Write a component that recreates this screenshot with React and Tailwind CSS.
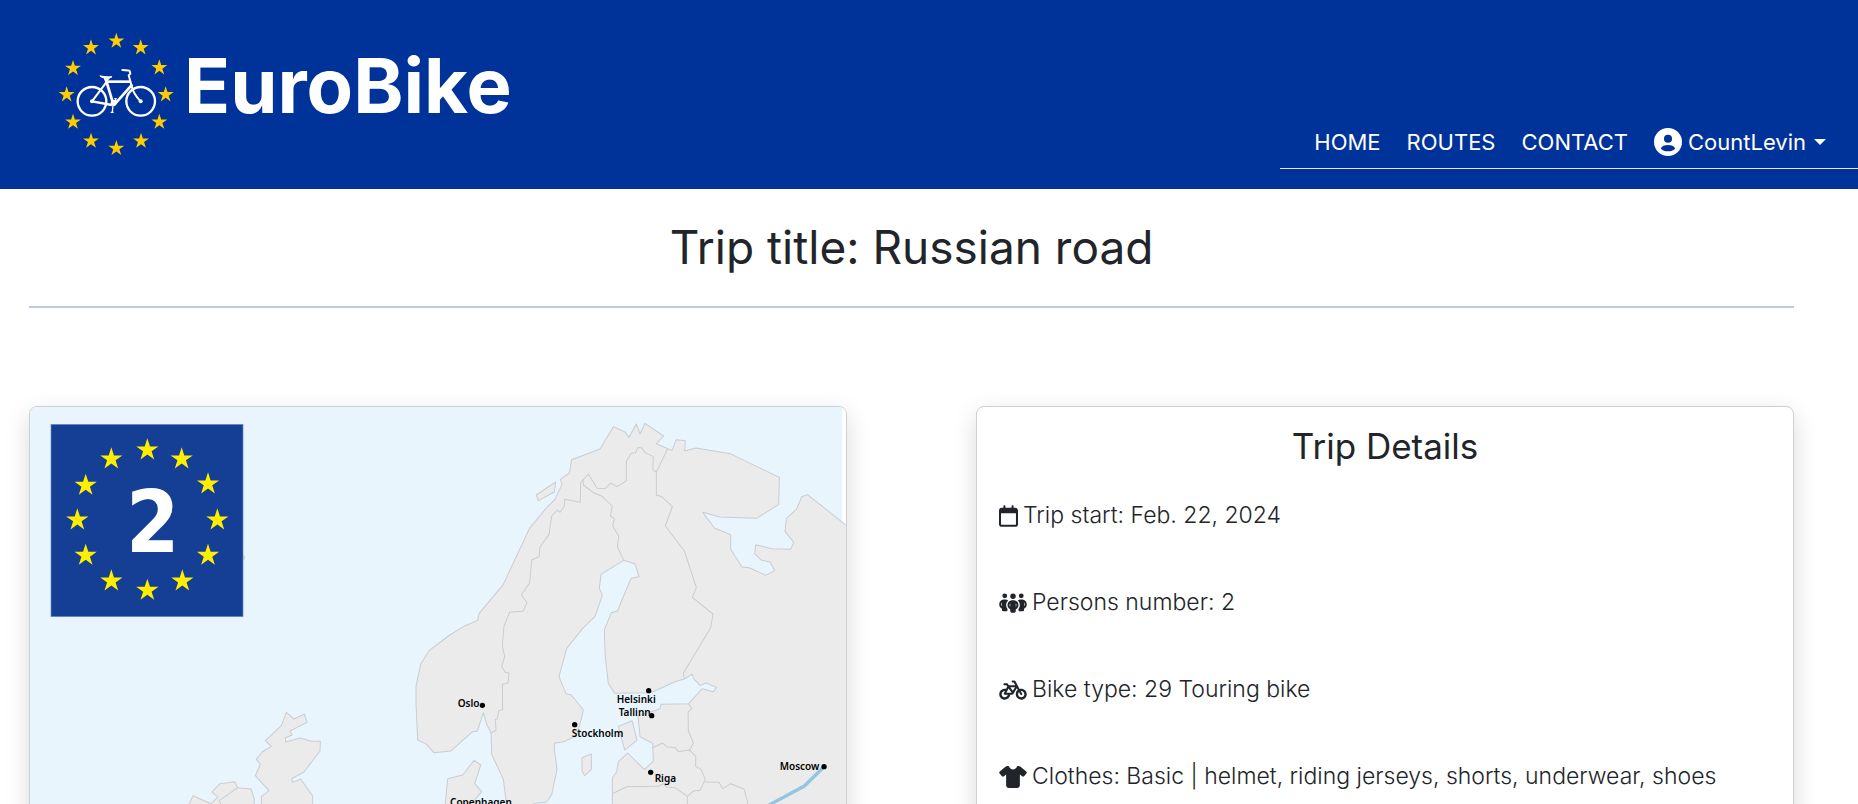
import { FaBicycle, FaPeopleGroup, FaRegCalendar, FaShirt } from "react-icons/fa6";

function starPoints(cx, cy, r) {
  return Array.from({ length: 10 }, (_, i) => {
    const radius = i % 2 === 0 ? r : r * 0.382;
    const angle = (Math.PI / 5) * i - Math.PI / 2;
    return `${(cx + radius * Math.cos(angle)).toFixed(1)},${(cy + radius * Math.sin(angle)).toFixed(1)}`;
  }).join(" ");
}

function Stars({ centers, r, fill }) {
  return centers.map(([x, y]) => <polygon key={`${x}-${y}`} points={starPoints(x, y, r)} fill={fill} />);
}

const LOGO_STARS = [
  [199, 63], [272, 83], [328, 143], [347, 224], [328, 306], [273, 363],
  [199, 385], [123, 363], [69, 306], [50, 224], [69, 145], [123, 83],
];

const SIGN_STARS = [
  [382, 177], [485, 204], [564, 279], [592, 387], [564, 493], [487, 570],
  [382, 598], [274, 570], [197, 493], [172, 387], [197, 283], [274, 204],
];

function Logo() {
  return (
    <svg viewBox="0 0 402 450" className="h-[150px] w-[134px] shrink-0" aria-hidden="true">
      <Stars centers={LOGO_STARS} r={25} fill="#ffcc00" />
      <g fill="none" stroke="#fff" strokeLinejoin="round">
        <circle cx="126" cy="244" r="43" strokeWidth="7" />
        <circle cx="272" cy="244" r="43" strokeWidth="7" />
        <path d="M168 180 L191 256" strokeWidth="8" />
        <path d="M126 244 L171 184" strokeWidth="6" />
        <path d="M126 244 L186 255" strokeWidth="7" />
        <path d="M173 185 L240 185" strokeWidth="8" />
        <path d="M191 256 L247 193" strokeWidth="8" />
        <path d="M272 244 Q250 222 245 198 L236 166 L241 161 L239 153 Q237 151 217 150" strokeWidth="6" strokeLinecap="round" />
        <path d="M189 256 L187 276 M182 277 L191 277 M197 244 L197 236 M193 236 L200 236" strokeWidth="4" />
      </g>
      <path d="M149 166 Q168 170 185 168 Q190 171 180 175 L173 182 L164 182 L161 175 Q148 172 149 166 Z" fill="#fff" />
      <circle cx="191" cy="248" r="9" fill="#fff" />
      <circle cx="126" cy="244" r="6" fill="#fff" />
      <circle cx="272" cy="244" r="6" fill="#fff" />
    </svg>
  );
}

function UserIcon() {
  return (
    <svg viewBox="2 2 20 20" className="h-7 w-7" fill="currentColor" aria-hidden="true">
      <path
        fillRule="evenodd"
        d="M12 2a10 10 0 1 0 0 20a10 10 0 1 0 0-20zM12 6.800a2.900 2.900 0 1 1 0 5.800a2.900 2.900 0 1 1 0-5.800zM6.800 16.600C7.600 14.800 9.500 14.100 12 14.100S16.400 14.800 17.200 16.600C16 18 14.200 18.600 12 18.600S8 18 6.800 16.600z"
      />
    </svg>
  );
}

const MAINLAND =
  "M53 1047 L48 940 48 885 62 820 88 778 145 735 195 704 233 688 237 668 310 580 388 413 440 350 465 325 486 280 481 265 508 246 515 206 600 174 640 107 675 123 687 139 709 99 720 129 735 97 791 135 769 158 803 173 816 178 829 146 856 149 854 180 888 171 990 188 1138 259 1136 340 1070 382 960 378 908 364 943 411 992 431 992 475 1026 528 1048 530 1097 553 1124 539 1110 513 1083 507 1064 488 1067 461 1115 473 1172 475 1181 454 1155 421 1159 382 1190 354 1205 317 1222 311 1345 408 L1345 2600 100 2600 60 1600 200 1420 560 1400 637 1300 637 1160 650 1142 655 1112 683 1086 733 1136 760 1110 758 1057 720 1037 714 975 780 953 783 940 866 938 907 893 940 902 949 889 919 876 900 883 880 862 877 849 853 864 830 870 752 905 645 907 625 878 616 800 613 716 634 665 652 660 693 562 717 557 705 519 671 508 603 550 598 592 607 613 585 676 548 712 500 772 477 857 498 908 514 912 550 957 540 1000 528 1035 490 1052 463 1057 463 1075 471 1135 455 1210 440 1233 400 1238 380 1290 330 1300 320 1242 310 1165 275 1090 273 1025 260 1000 250 965 232 1020 216 1023 152 1080 101 1085 80 1060 Z";

const ISLANDS = [
  "M467 273 L463 303 415 329 409 312 Z",
  "M655 1006 L696 989 711 1047 674 1077 Z",
  "M546 1100 L574 1089 574 1135 554 1154 546 1140 Z",
  "M135 1245 L143 1163 188 1152 222 1108 242 1122 224 1178 245 1202 225 1225 230 1420 140 1420 Z",
];

const BORDERS = [
  "M273 1025 L288 1018 286 985 292 983 296 960 308 955 307 880 324 876 327 847 315 843 305 826 314 797 307 765 312 705 329 664 369 661 381 635 364 612 389 575 395 507 417 497 420 467 447 430 455 375 472 357 480 364 493 345 494 325 541 334 542 275 565 249 591 292 615 293 632 276 651 287 679 269 679 210 694 187 707 185 713 170 724 170 735 185 760 197 758 236 769 243 803 173",
  "M549 265 L550 282 580 305 605 315 637 345 631 375 643 383 638 405 656 435 652 467 671 508",
  "M769 243 L769 312 785 317 817 347 796 405 853 480 889 590 877 619 939 669 932 710 850 846 853 864",
  "M866 938 L875 953 864 963 865 1020 880 1055 868 1080",
  "M758 1070 L788 1056 800 1067 825 1070 835 1082 868 1077 887 1095 887 1126 903 1135 916 1165 900 1198 880 1200 862 1216",
  "M637 1208 L680 1187 775 1186 790 1178 800 1188 825 1190 862 1216 862 1300",
  "M916 1173 L957 1174 968 1193 992 1178 1032 1194 1043 1235 1030 1300",
];

const BRITAIN =
  "M799 964 L822 984 853 969 861 994 810 1020 816 1032 796 1040 797 1053 840 1041 875 1051 901 1051 900 1080 852 1143 815 1163 818 1174 842 1164 878 1215 878 1300 960 1500 940 1700 700 1760 760 1500 724 1300 724 1217 747 1199 706 1154 721 1119 709 1105 726 1083 754 1066 736 1049 784 1004 Z";
const IRELAND =
  "M506 1242 L519 1214 573 1238 594 1218 576 1203 600 1178 644 1172 653 1190 693 1194 703 1225 690 1500 480 1560 Z";

const CITIES = [
  { name: "Oslo", x: 247, y: 943, tx: 173, ty: 948 },
  { name: "Helsinki", x: 746, y: 899, tx: 650, ty: 935 },
  { name: "Tallinn", x: 755, y: 974, tx: 656, ty: 976 },
  { name: "Stockholm", x: 524, y: 1001, tx: 515, ty: 1038 },
  { name: "Riga", x: 752, y: 1144, tx: 764, ty: 1173 },
  { name: "Moscow", x: 1272, y: 1127, tx: 1139, ty: 1137 },
  { name: "Copenhagen", x: 262, y: 1268, tx: 150, ty: 1244 },
];

function RouteMap() {
  return (
    <svg
      viewBox="-1110 48 2448 2448"
      className="block w-full rounded-[7px]"
      role="img"
      aria-label="EuroVelo 2 route map"
    >
      <rect x="-1110" y="48" width="2448" height="2448" fill="#e8f5fd" />
      <rect x="1326" y="48" width="14" height="400" fill="#fff" />
      <g fill="#ebebeb" stroke="#c9cdd0" strokeWidth="3" strokeLinejoin="round">
        <path d={MAINLAND} />
        {ISLANDS.map((d) => <path key={d} d={d} />)}
        {BORDERS.map((d) => <path key={d} d={d} fill="none" />)}
      </g>
      <path d="M1272 1127 L1213 1185 1105 1243 900 1360 300 1800 -300 2100" fill="none" stroke="#93c5e2" strokeWidth="10" />
      <g fill="#000" fontFamily="'Noto Sans', sans-serif" fontSize="30" fontWeight="600">
        {CITIES.map((c) => (
          <g key={c.name}>
            <circle cx={c.x} cy={c.y} r="8" />
            <text x={c.tx} y={c.ty}>{c.name}</text>
          </g>
        ))}
      </g>
      <g transform="translate(-1140 0)">
        <g fill="#ebebeb" stroke="#c9cdd0" strokeWidth="3" strokeLinejoin="round">
          <path d={BRITAIN} />
          <path d={IRELAND} />
          <path d="M653 1190 L598 1229 612 1260" fill="none" />
          <circle cx="669" cy="500" r="5" />
        </g>
        <rect x="93" y="100" width="576" height="577" fill="#143f94" stroke="#6f8fc2" strokeWidth="2" />
        <Stars centers={SIGN_STARS} r={35} fill="#ffee00" />
        <text x="398" y="482" textAnchor="middle" fill="#fff" fontFamily="'DejaVu Sans Condensed', 'DejaVu Sans', sans-serif" fontWeight="700" fontSize="256">
          2
        </text>
      </g>
    </svg>
  );
}

const NAV_LINKS = ["HOME", "ROUTES", "CONTACT"];

const DETAILS = [
  { icon: FaRegCalendar, width: "w-[19px]", text: "Trip start: Feb. 22, 2024" },
  { icon: FaPeopleGroup, width: "w-[28px]", text: "Persons number: 2" },
  { icon: FaBicycle, width: "w-[28px]", text: "Bike type: 29 Touring bike" },
  { icon: FaShirt, width: "w-[28px]", text: "Clothes: Basic | helmet, riding jerseys, shorts, underwear, shoes" },
];

const CARD = "min-w-0 flex-1 rounded-lg border border-[#cfd0d1] bg-white shadow-[0_8px_24px_rgba(0,0,0,0.15)]";

export default function App() {
  return (
    <div className="min-h-screen bg-white font-['Inter','Noto_Sans',sans-serif] text-[#212529]">
      <header className="flex justify-between bg-[#003399] text-white">
        <a href="#" className="flex items-center pt-5 pb-[19px] pl-[50px]">
          <Logo />
          <span className="pb-5 text-[76px] leading-none font-bold">EuroBike</span>
        </a>
        <nav className="mb-5 flex items-center gap-[26px] self-end border-b border-[#e6e6e6] pr-8 pb-2.5 pl-[34px] text-[22px] leading-8">
          {NAV_LINKS.map((label) => (
            <a key={label} href="#">{label}</a>
          ))}
          <button type="button" className="flex items-center gap-1.5">
            <UserIcon />
            <span>CountLevin</span>
            <svg viewBox="0 0 12 6" className="ml-0.5 h-1.5 w-3" fill="currentColor" aria-hidden="true">
              <path d="M0 0h12L6 6z" />
            </svg>
          </button>
        </nav>
      </header>

      <main className="ml-[29px] w-[95%] pb-16">
        <h1 className="border-b-2 border-[#b9cbe0] pt-8 pb-8 text-center text-[46px] leading-[53px]">
          Trip title: Russian road
        </h1>
        <div className="mt-[98px] flex items-stretch gap-[129px]">
          <section className={CARD}>
            <RouteMap />
          </section>
          <section className={CARD}>
            <h2 className="mt-[18px] text-center text-[35px] leading-[42px]">Trip Details</h2>
            <ul className="mt-[35px] flex flex-col gap-15 px-[22px] text-[23px] leading-[27px] font-light">
              {DETAILS.map(({ icon: Icon, width, text }) => (
                <li key={text} className="flex items-center gap-[5px]">
                  <Icon className={`h-[22px] shrink-0 ${width}`} aria-hidden="true" />
                  <span>{text}</span>
                </li>
              ))}
            </ul>
          </section>
        </div>
      </main>
    </div>
  );
}
